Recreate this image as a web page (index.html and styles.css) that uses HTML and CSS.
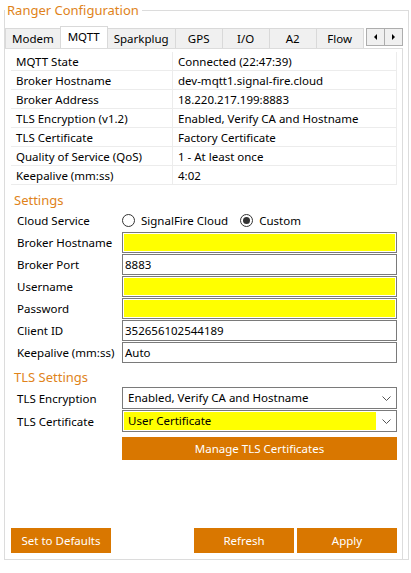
FILE: index.html
```html
<!DOCTYPE html>
<html lang="en">
<head>
<meta charset="UTF-8">
<meta name="viewport" content="width=device-width, initial-scale=1.0">
<title>Ranger Configuration</title>
<link rel="stylesheet" href="styles.css">
</head>
<body>
<fieldset class="group">
    <legend>Ranger Configuration</legend>

    <div class="tabs">
        <div class="tab">Modem</div>
        <div class="tab active">MQTT</div>
        <div class="tab">Sparkplug</div>
        <div class="tab">GPS</div>
        <div class="tab">I/O</div>
        <div class="tab">A2</div>
        <div class="tab">Flow</div>
        <div class="tab-scroll">
            <span class="scroll-btn"><span class="tri left"></span></span>
            <span class="scroll-btn"><span class="tri right"></span></span>
        </div>
    </div>

    <div class="page">
        <table class="status">
            <tr><td>MQTT State</td><td>Connected (22:47:39)</td></tr>
            <tr><td>Broker Hostname</td><td>dev-mqtt1.signal-fire.cloud</td></tr>
            <tr><td>Broker Address</td><td>18.220.217.199:8883</td></tr>
            <tr><td>TLS Encryption (v1.2)</td><td>Enabled, Verify CA and Hostname</td></tr>
            <tr><td>TLS Certificate</td><td>Factory Certificate</td></tr>
            <tr><td>Quality of Service (QoS)</td><td>1 - At least once</td></tr>
            <tr><td>Keepalive (mm:ss)</td><td>4:02</td></tr>
        </table>

        <div class="section">Settings</div>
        <div class="form">
            <label>Cloud Service</label>
            <div class="radios">
                <span class="radio"></span> SignalFire Cloud
                <span class="radio checked"></span> Custom
            </div>
            <label>Broker Hostname</label>
            <div class="field required"></div>
            <label>Broker Port</label>
            <div class="field">8883</div>
            <label>Username</label>
            <div class="field required"></div>
            <label>Password</label>
            <div class="field required"></div>
            <label>Client ID</label>
            <div class="field">352656102544189</div>
            <label>Keepalive (mm:ss)</label>
            <div class="field">Auto</div>
        </div>

        <div class="section tls">TLS Settings</div>
        <div class="form combos">
            <label>TLS Encryption</label>
            <div class="combo">
                <span class="combo-text">Enabled, Verify CA and Hostname</span>
                <svg class="chevron" width="9" height="5" viewBox="0 0 9 5"><polyline points="0.5,0.5 4.5,4.5 8.5,0.5" fill="none" stroke="#555" stroke-width="1"/></svg>
            </div>
            <label>TLS Certificate</label>
            <div class="combo">
                <span class="combo-text required">User Certificate</span>
                <svg class="chevron" width="9" height="5" viewBox="0 0 9 5"><polyline points="0.5,0.5 4.5,4.5 8.5,0.5" fill="none" stroke="#555" stroke-width="1"/></svg>
            </div>
            <span></span>
            <button class="btn manage">Manage TLS Certificates</button>
        </div>

        <div class="actions">
            <button class="btn">Set to Defaults</button>
            <span class="spacer"></span>
            <button class="btn">Refresh</button>
            <button class="btn">Apply</button>
        </div>
    </div>
</fieldset>
</body>
</html>
```

FILE: styles.css
```css
body {
    margin: 0;
    background-color: #fff;
    font-family: "Noto Sans", "Open Sans", sans-serif;
    font-size: 11.5px;
    color: #000;
}

.group {
    box-sizing: border-box;
    width: 405px;
    margin: 0 0 0 4px;
    padding: 0;
    border: 1px solid #dcdcdc;
    min-width: 0;
}

.group legend {
    margin-left: 0;
    padding: 0 3px 0 2px;
    font-size: 13px;
    line-height: 20px;
    color: #e0831a;
}

/* tab strip */

.tabs {
    display: flex;
    align-items: flex-end;
    height: 22px;
    margin-top: 6px;
}

.tab {
    box-sizing: border-box;
    min-width: 48px;
    height: 20px;
    padding: 0 6px;
    margin-right: -1px;
    border: 1px solid #d9d9d9;
    border-bottom: none;
    background-color: #f0f0f0;
    line-height: 19px;
    text-align: center;
}

.tab.active {
    height: 22px;
    position: relative;
    z-index: 1;
    background-color: #fff;
    line-height: 19px;
}

.tab-scroll {
    display: flex;
    align-self: flex-start;
    margin: 2px 5px 0 auto;
    border: 1px solid #adadad;
}

.scroll-btn {
    display: flex;
    align-items: center;
    justify-content: center;
    width: 17px;
    height: 16px;
    background-color: #f0f0f0;
}

.scroll-btn + .scroll-btn {
    border-left: 1px solid #adadad;
}

.tri {
    width: 0;
    height: 0;
    border-top: 3px solid transparent;
    border-bottom: 3px solid transparent;
}

.tri.left {
    border-right: 3px solid #000;
}

.tri.right {
    border-left: 3px solid #000;
}

/* tab page */

.page {
    box-sizing: border-box;
    display: flex;
    flex-direction: column;
    height: 511px;
    margin-right: 5px;
    padding: 3px 5px 6px 6px;
    border-top: 1px solid #dcdcdc;
    border-right: 1px solid #dcdcdc;
    background-color: #fff;
}

.status {
    width: 100%;
    border-collapse: collapse;
}

.status td {
    height: 18px;
    padding: 0 5px;
    border-bottom: 1px solid #ececec;
    white-space: nowrap;
}

.status td:first-child {
    width: 151px;
    border-right: 1px solid #ececec;
}

.status td:last-child {
    border-right: 1px solid #ececec;
}

.section {
    margin-top: 5px;
    padding-left: 3px;
    font-size: 13px;
    line-height: 20px;
    color: #e0831a;
}

.section.tls {
    margin-top: 4px;
}

.form {
    display: grid;
    grid-template-columns: 111px 1fr;
    grid-auto-rows: 21px;
    row-gap: 1px;
    align-items: center;
}

.form label {
    padding-left: 6px;
}

.radios {
    display: flex;
    align-items: center;
}

.radio {
    box-sizing: border-box;
    width: 13px;
    height: 13px;
    margin-right: 6px;
    border: 1px solid #333;
    border-radius: 50%;
    background-color: #fff;
    position: relative;
}

.radio.checked {
    margin-left: 12px;
}

.radio.checked::after {
    content: "";
    position: absolute;
    top: 2px;
    left: 2px;
    width: 7px;
    height: 7px;
    border-radius: 50%;
    background-color: #333;
}

.field {
    box-sizing: border-box;
    height: 21px;
    padding: 0 2px;
    border: 1px solid #7a7a7a;
    line-height: 19px;
}

.required {
    background-color: #ffff00;
    box-shadow: inset 0 0 0 1px #fff;
}

.combos {
    grid-auto-rows: 22px;
}

.combo {
    box-sizing: border-box;
    display: flex;
    align-items: center;
    height: 22px;
    padding: 1px;
    border: 1px solid #7a7a7a;
}

.combo-text {
    flex: 1;
    height: 18px;
    padding-left: 4px;
    line-height: 18px;
}

.combo-text.required {
    box-shadow: none;
}

.chevron {
    margin: 0 4px 0 6px;
}

.btn {
    height: 25px;
    width: 100px;
    padding: 0;
    border: none;
    background-color: #d97700;
    color: #fff;
    font-family: "Noto Sans", "Open Sans", sans-serif;
    font-size: 11.5px;
    cursor: pointer;
}

.btn.manage {
    width: auto;
    height: 23px;
    margin-top: 4px;
    align-self: start;
}

.actions {
    display: flex;
    gap: 3px;
    margin-top: auto;
}

.spacer {
    flex: 1;
}
```
